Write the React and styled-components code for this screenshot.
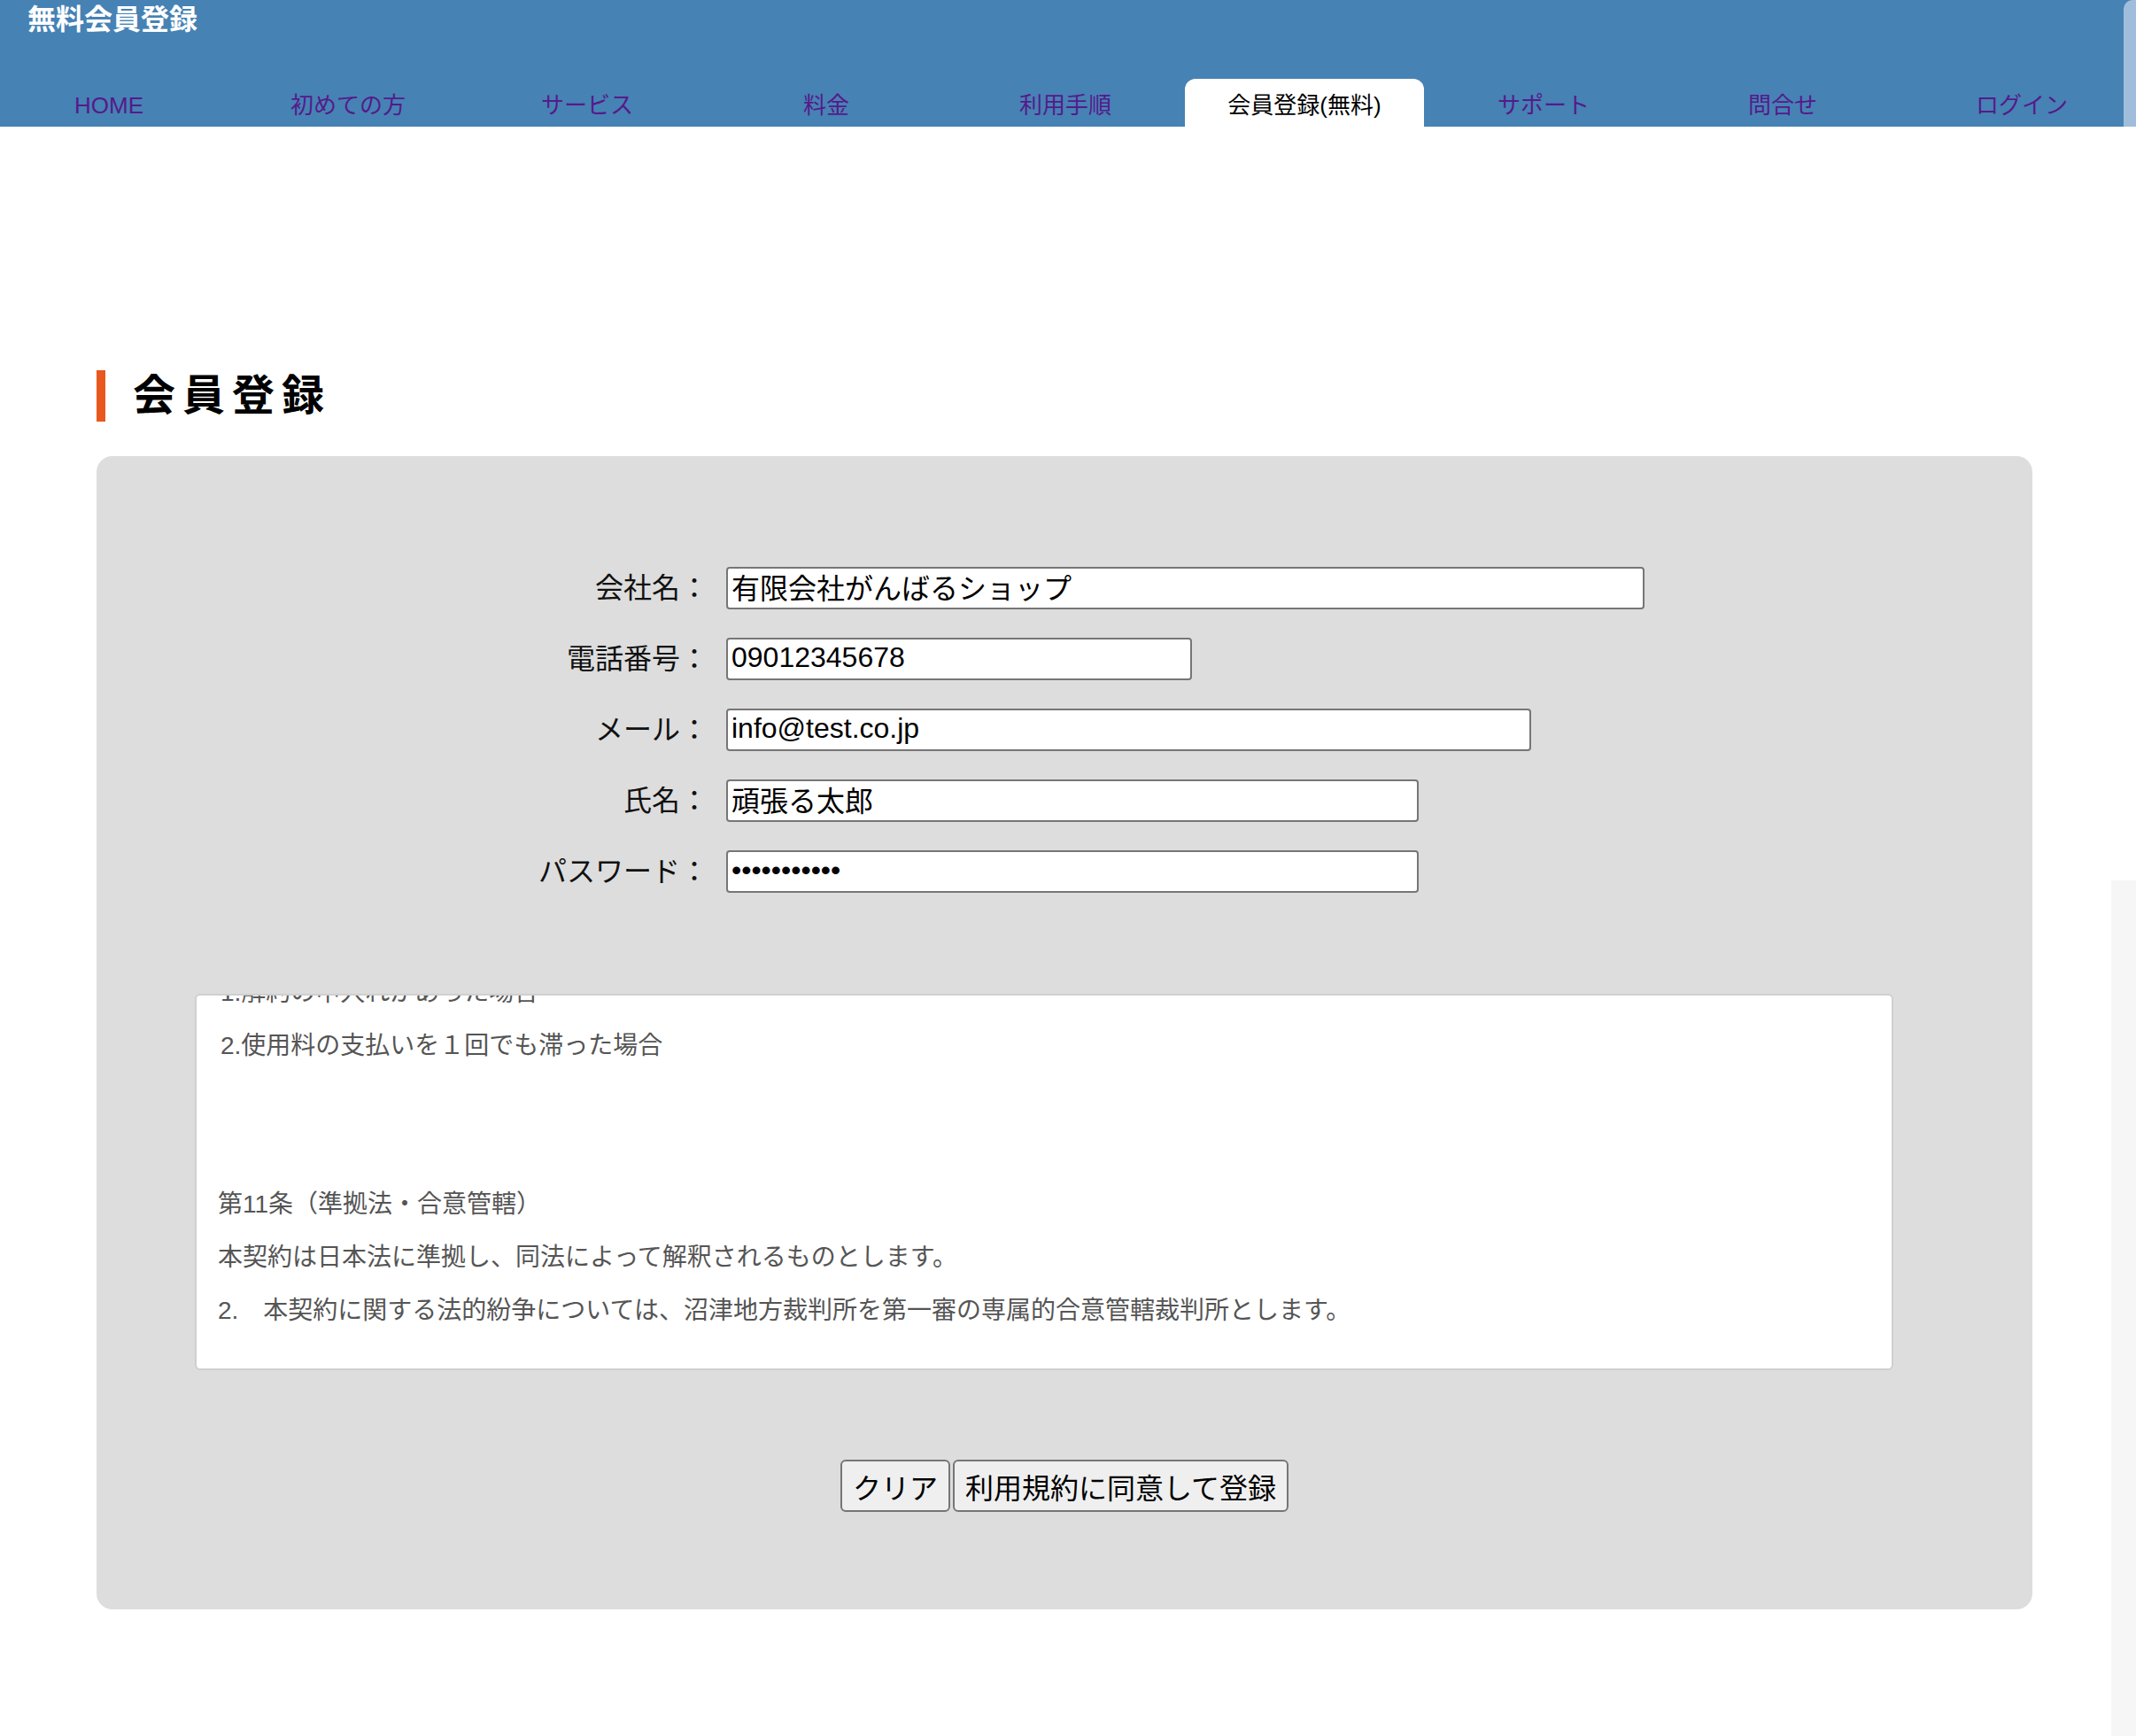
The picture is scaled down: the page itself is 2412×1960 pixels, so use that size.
import React from 'react';
import styled, { createGlobalStyle } from 'styled-components';

const GlobalStyle = createGlobalStyle`
html, body {
  margin:0;
  padding:0;
  background:#fff;
}
body {
  font-family: "Liberation Sans", "Noto Sans CJK JP", sans-serif;
}
* {
  box-sizing: border-box;
}
`;

const Header = styled.header`
height:143px;
background:#4682b4;
display:flex;
flex-direction:column;
justify-content:space-between;
overflow:hidden;
`;

const SiteTitle = styled.h1`
margin:0;
padding-left:31px;
font-size:32px;
line-height:44px;
font-weight:bold;
color:#fff;
`;

const NavList = styled.ul`
display:flex;
margin:0 0 0 -12px;
padding:0;
list-style:none;
height:54px;
`;

const NavTab = styled.li`
flex:0 0 270px;
display:flex;
align-items:center;
justify-content:center;
padding-top:${p => p.$latin ? '6px' : '0'};
font-size:26px;
color:${p => p.$active ? '#000' : '#551a8b'};
background:${p => p.$active ? '#fff' : 'transparent'};
border-radius:12px 12px 0 0;
`;

const EdgeRail = styled.div`
position:fixed;
top:0;
right:0;
width:14px;
height:143px;
background:#a0bedb;
border-top-left-radius:10px;
`;

const GhostRail = styled.div`
position:fixed;
top:994px;
right:0;
bottom:0;
width:28px;
background:#f6f6f6;
`;

const Main = styled.main`
padding:275px 117px 143px 109px;
`;

const Heading = styled.h2`
display:flex;
align-items:center;
gap:31px;
margin:0;
height:58px;
font-size:48px;
font-weight:bold;
letter-spacing:8px;
color:#000;
&::before {
  content:'';
  width:10px;
  height:58px;
  background:#e8581e;
}
`;

const HeadingText = styled.span`
line-height:58px;
padding-bottom:0;
`;

const Panel = styled.section`
margin-top:39px;
width:2186px;
height:1302px;
background:#dddddd;
border-radius:18px;
padding-top:125px;
`;

const FieldList = styled.div`
display:flex;
flex-direction:column;
gap:32px;
`;

const FieldRow = styled.label`
display:flex;
align-items:center;
height:48px;
`;

const FieldLabel = styled.span`
width:691px;
margin-right:20px;
padding-bottom:6px;
text-align:right;
font-size:32px;
color:#111;
`;

const TextInput = styled.input`
width:${p => p.$w}px;
height:48px;
padding:0 4px 4px;
border:2px solid #767676;
border-radius:4px;
background:#fff;
font-family:"Liberation Sans", "Noto Sans CJK JP", sans-serif;
font-size:32px;
color:#000;
outline:none;
`;

const TermsBox = styled.div`
margin:114px 0 0 111px;
width:1918px;
height:425px;
background:#fff;
border:2px solid #cfcfcf;
border-radius:6px;
display:flex;
flex-direction:column;
justify-content:flex-end;
overflow:hidden;
padding:0 24px 35px;
`;

const TermLine = styled.p`
margin:0;
flex-shrink:0;
font-size:28px;
line-height:60px;
color:#555;
white-space:nowrap;
padding-left:${p => p.$item ? '3px' : '0'};
`;

const TermGap = styled.div`
flex-shrink:0;
height:119px;
`;

const ButtonRow = styled.div`
margin-top:101px;
display:flex;
justify-content:center;
gap:3px;
`;

const FormButton = styled.button`
height:59px;
padding:0 12px;
background:#efefef;
border:2px solid #767676;
border-radius:6px;
font-family:"Liberation Sans", "Noto Sans CJK JP", sans-serif;
font-size:32px;
color:#000;
`;

const navItems = ['HOME', '初めての方', 'サービス', '料金', '利用手順', '会員登録(無料)', 'サポート', '問合せ', 'ログイン'];

const fields = [
    { label: '会社名：', value: '有限会社がんばるショップ', w: 1037 },
    { label: '電話番号：', value: '09012345678', w: 526 },
    { label: 'メール：', value: 'info@test.co.jp', w: 909 },
    { label: '氏名：', value: '頑張る太郎', w: 782 },
    { label: 'パスワード：', value: 'password123', w: 782, type: 'password' },
];

const App = () => {
    return (
        <>
            <GlobalStyle />
            <Header>
                <SiteTitle>無料会員登録</SiteTitle>
                <NavList>
                    {navItems.map(item => (
                        <NavTab key={item} $active={item === '会員登録(無料)'} $latin={item === 'HOME'}>{item}</NavTab>
                    ))}
                </NavList>
            </Header>
            <Main>
                <Heading><HeadingText>会員登録</HeadingText></Heading>
                <Panel>
                    <FieldList>
                        {fields.map(f => (
                            <FieldRow key={f.label}>
                                <FieldLabel>{f.label}</FieldLabel>
                                <TextInput $w={f.w} type={f.type || 'text'} defaultValue={f.value} readOnly />
                            </FieldRow>
                        ))}
                    </FieldList>
                    <TermsBox>
                        <TermLine $item>1.解約の申入れがあった場合</TermLine>
                        <TermLine $item>2.使用料の支払いを１回でも滞った場合</TermLine>
                        <TermGap />
                        <TermLine>第11条（準拠法・合意管轄）</TermLine>
                        <TermLine>本契約は日本法に準拠し、同法によって解釈されるものとします。</TermLine>
                        <TermLine>2.　本契約に関する法的紛争については、沼津地方裁判所を第一審の専属的合意管轄裁判所とします。</TermLine>
                    </TermsBox>
                    <ButtonRow>
                        <FormButton type="reset">クリア</FormButton>
                        <FormButton type="submit">利用規約に同意して登録</FormButton>
                    </ButtonRow>
                </Panel>
            </Main>
            <EdgeRail />
            <GhostRail />
        </>
    )
}

export default App;
